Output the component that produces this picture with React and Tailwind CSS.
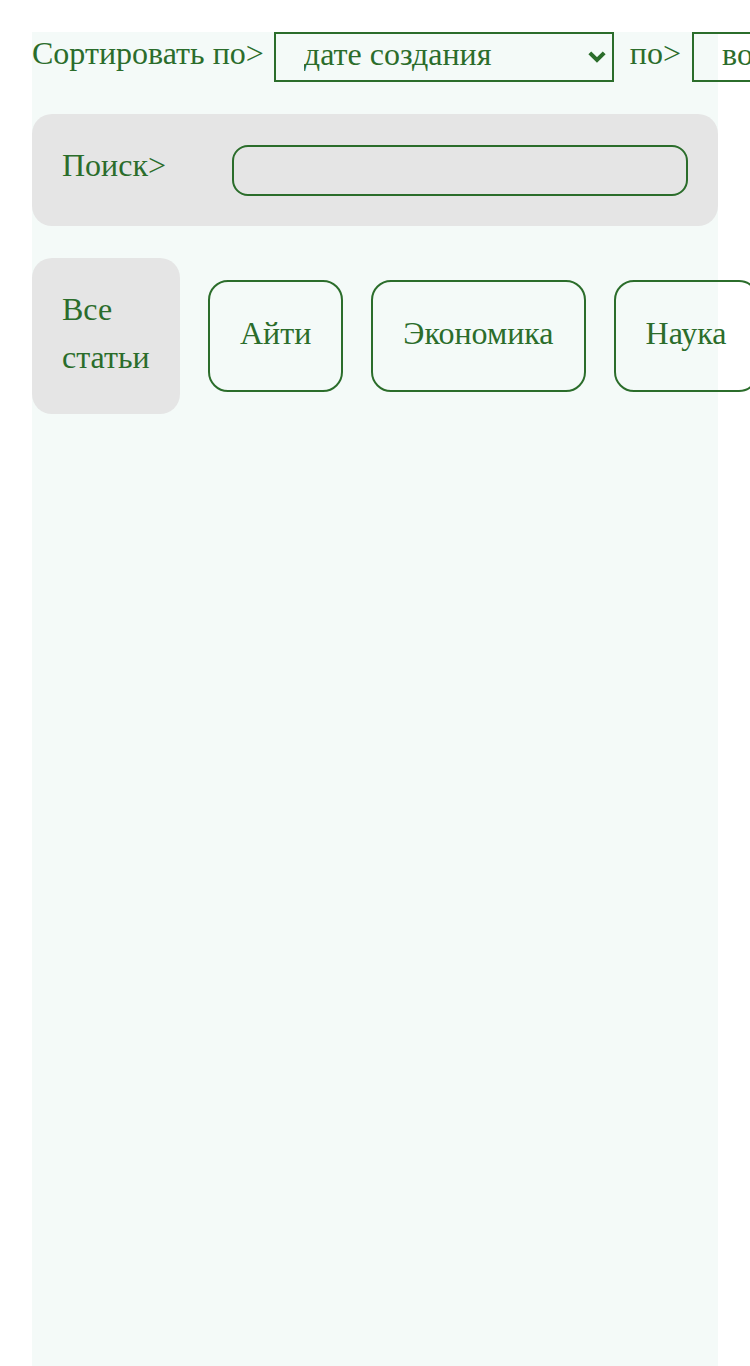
import React from "react";

const G = "text-[#2b6d2b]";

function Chevron() {
  return (
    <svg
      className="pointer-events-none absolute right-[7px] top-[18px]"
      width="20"
      height="14"
      viewBox="0 0 20 14"
    >
      <path d="M2.8 2.8 L10 10 L17.2 2.8" fill="none" stroke="#2b6d2b" strokeWidth="4" strokeLinecap="butt" strokeLinejoin="miter" />
    </svg>
  );
}

function Select({ value, options, width }) {
  return (
    <div className={`relative shrink-0 ${width}`}>
      <select
        defaultValue={value}
        className={`appearance-none w-full h-[50px] border-2 border-[#2b6d2b] bg-transparent pl-[28px] pr-[36px] pt-0 pb-[6px] text-[32px] leading-[40px] ${G} outline-none rounded-none`}
        style={{ fontFamily: '"Liberation Serif", "Times New Roman", serif' }}
      >
        {options.map((o) => (
          <option key={o}>{o}</option>
        ))}
      </select>
      <Chevron />
    </div>
  );
}

export default function App() {
  return (
    <div
      className="bg-white min-h-screen pt-8 pl-8 w-[750px] overflow-hidden"
      style={{ fontFamily: '"Liberation Serif", "Times New Roman", serif' }}
    >
      <div className={`w-[686px] min-h-[1334px] bg-[#f4faf8] ${G}`}>
        <div className="flex items-start">
          <span className="text-[32px] leading-[42px] whitespace-nowrap mr-[10px]">Сортировать по&gt;</span>
          <Select value="дате создания" options={["дате создания", "названию"]} width="w-[340px]" />
          <span className="text-[32px] leading-[42px] whitespace-nowrap ml-[16px] mr-[11px]">по&gt;</span>
          <Select value="возрастанию" options={["возрастанию", "убыванию"]} width="w-[260px]" />
        </div>

        <div className="mt-[32px] bg-[#e5e5e5] rounded-[20px] p-[30px] flex items-center">
          <span className="text-[32px] leading-[42px] pb-[10px] w-[170px] shrink-0">Поиск&gt;</span>
          <input
            type="text"
            className="flex-1 h-[51px] border-2 border-[#2b6d2b] rounded-[16px] bg-transparent outline-none px-3 text-[24px]"
          />
        </div>

        <div className="mt-[32px] flex items-center gap-[28px]">
          <div className="bg-[#e5e5e5] rounded-[20px] px-[30px] pt-[27px] pb-[33px] text-[32px] leading-[48px] w-[148px] shrink-0">
            Все статьи
          </div>
          {["Айти", "Экономика", "Наука"].map((t) => (
            <button
              key={t}
              className="shrink-0 border-2 border-[#2b6d2b] rounded-[20px] px-[30px] pt-[27px] pb-[33px] text-[32px] leading-[48px] bg-transparent"
            >
              {t}
            </button>
          ))}
        </div>
      </div>
    </div>
  );
}
